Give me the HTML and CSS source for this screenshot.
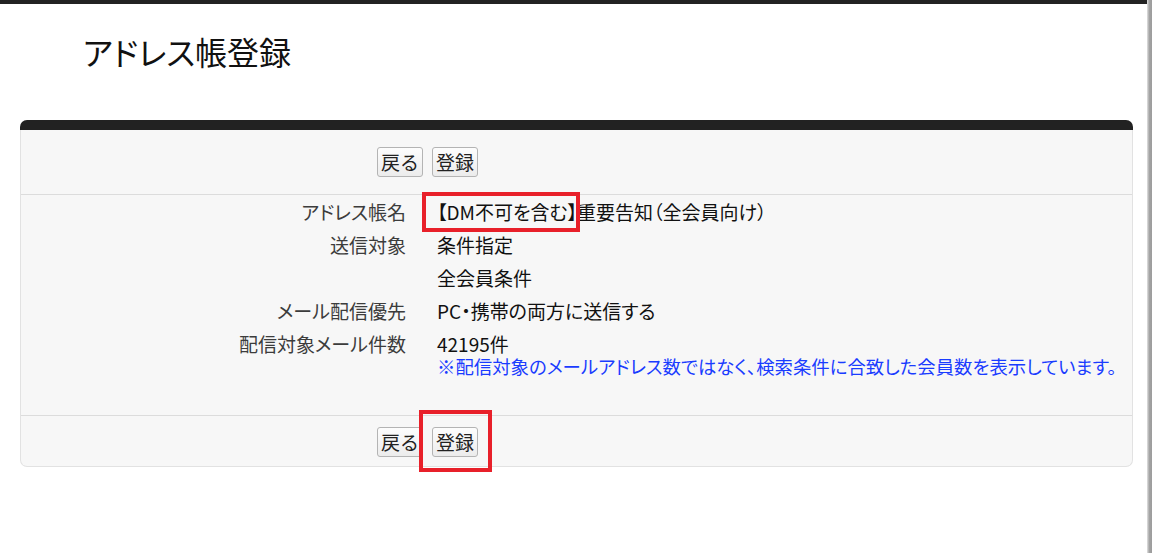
FILE: index.html
```html
<!DOCTYPE html>
<html lang="ja">
<head>
    <meta charset="UTF-8">
    <meta name="viewport" content="width=device-width, initial-scale=1.0">
    <title>アドレス帳登録</title>
    <link rel="stylesheet" href="styles.css">
</head>
<body>
    <div class="page">
        <div class="topBar"></div>
        <h1 class="pageTitle">アドレス帳登録</h1>

        <div class="panel">
            <div class="panelHead"></div>

            <div class="btnRow btnRowTop">
                <button type="button" class="btn">戻る</button>
                <button type="button" class="btn">登録</button>
            </div>

            <div class="details">
                <div class="label">アドレス帳名</div>
                <div class="value"><span class="callout">【DM不可を含む】</span>重要告知（全会員向け）</div>

                <div class="label">送信対象</div>
                <div class="value">条件指定</div>

                <div class="label"></div>
                <div class="value">全会員条件</div>

                <div class="label">メール配信優先</div>
                <div class="value">PC・携帯の両方に送信する</div>

                <div class="label">配信対象メール件数</div>
                <div class="value">
                    <div>42195件</div>
                    <div class="note">※配信対象のメールアドレス数ではなく、検索条件に合致した会員数を表示しています。</div>
                </div>
            </div>

            <div class="btnRow btnRowBottom">
                <button type="button" class="btn">戻る</button>
                <span class="calloutBtn"><button type="button" class="btn">登録</button></span>
            </div>
        </div>
    </div>
    <div class="edge"></div>
</body>
</html>
```

FILE: styles.css
```css
html, body {
    height: 100%;
}
body {
    margin: 0;
    display: flex;
    font-family: "Noto Sans CJK JP", "Noto Sans", sans-serif;
    font-feature-settings: "palt";
    color: #111;
    background-color: #fff;
    overflow: hidden;
}
.page {
    width: 1147px;
    flex: none;
}
.topBar {
    height: 4px;
    background-color: #222;
}
.edge {
    flex: 1;
    background: linear-gradient(to right, #e2e2e2, #a4a4a4 45%, #9c9c9c);
}
.pageTitle {
    margin: 0;
    padding: 26px 0 0 83px;
    height: 90px;
    box-sizing: border-box;
    font-size: 32px;
    font-weight: normal;
    line-height: 42px;
    color: #111;
}
.panel {
    margin: 26px 14px 0 20px;
    background-color: #f7f7f7;
    border: 1px solid #e2e2e2;
    border-top: none;
    border-radius: 7px;
}
.panelHead {
    height: 10px;
    margin: 0 -1px;
    background-color: #222;
    border-radius: 7px 7px 0 0;
}
.btnRow {
    display: flex;
    gap: 9px;
    padding-left: 356px;
}
.btnRowTop {
    padding-top: 17px;
    padding-bottom: 17px;
    border-bottom: 1px solid #dcdcdc;
}
.btnRowBottom {
    padding-top: 11px;
    padding-bottom: 9px;
    border-top: 1px solid #dcdcdc;
}
.btn {
    font-family: inherit;
    font-size: 19px;
    line-height: 24px;
    color: #222;
    padding: 2px 3px 2px 3px;
    height: 30px;
    border: 1px solid #b4b4b4;
    border-radius: 3px;
    background: linear-gradient(#fdfdfd, #ececec);
    cursor: pointer;
}
.details {
    display: grid;
    grid-template-columns: 385px 1fr;
    column-gap: 31px;
    padding: 0 0 32px 0;
    font-size: 19px;
    line-height: 23px;
}
.label {
    text-align: right;
    color: #3c3c3c;
    padding: 5px 0;
}
.value {
    padding: 5px 0;
    color: #111;
}
.note {
    color: #1a3cff;
    font-size: 18.4px;
    white-space: nowrap;
}
.callout {
    position: relative;
}
.callout::after {
    content: "";
    position: absolute;
    left: -15px;
    right: -3px;
    top: -6px;
    bottom: -7px;
    border: 4px solid #e8202a;
}
.calloutBtn {
    position: relative;
    display: inline-block;
}
.calloutBtn::after {
    content: "";
    position: absolute;
    left: -13px;
    right: -14px;
    top: -17px;
    bottom: -15px;
    border: 4px solid #e8202a;
    pointer-events: none;
}
```
